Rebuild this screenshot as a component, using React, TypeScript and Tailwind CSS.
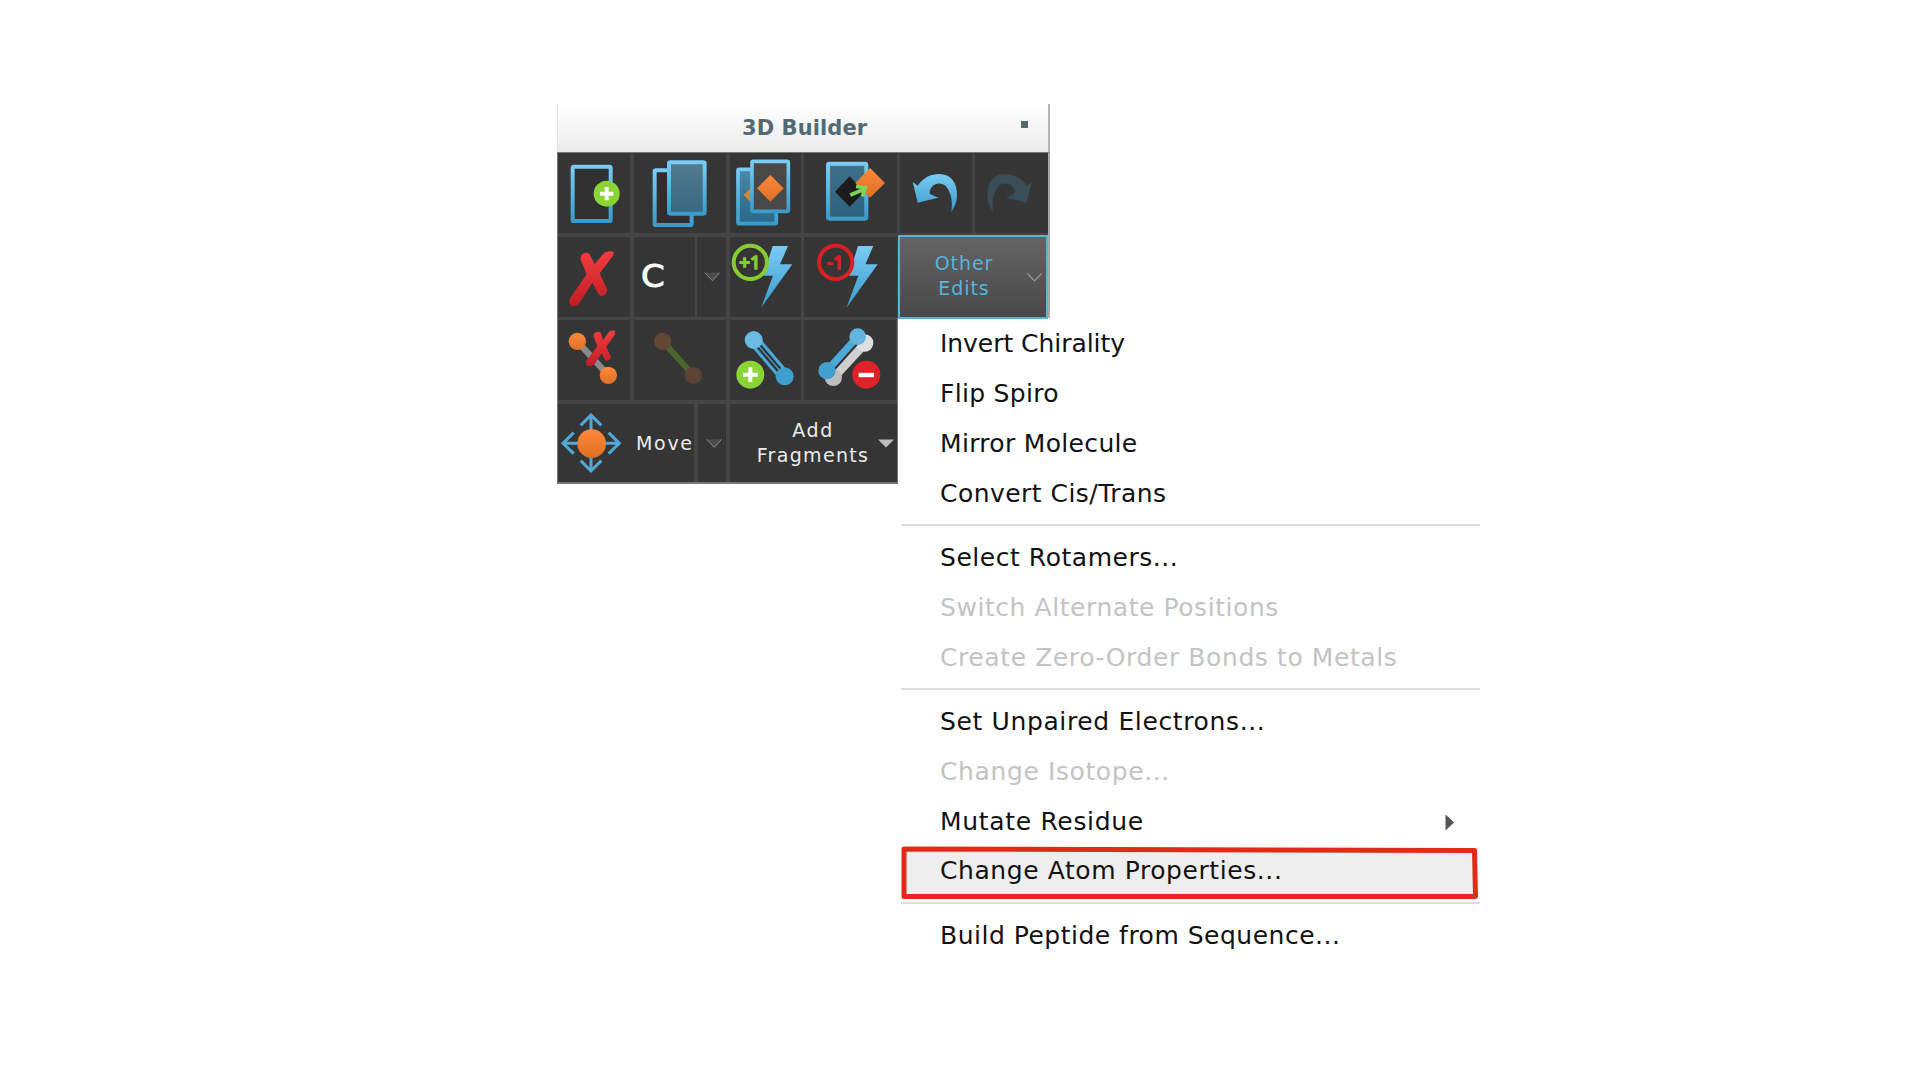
import type { ReactNode } from "react";

type MenuEntry =
  | { kind: "item"; label: string; tracking: string; disabled?: boolean; active?: boolean; submenu?: boolean }
  | { kind: "separator" };

const menu: MenuEntry[] = [
  { kind: "item", label: "Invert Chirality", tracking: "tracking-[-0.05px]" },
  { kind: "item", label: "Flip Spiro", tracking: "tracking-[0.3px]" },
  { kind: "item", label: "Mirror Molecule", tracking: "tracking-[0.32px]" },
  { kind: "item", label: "Convert Cis/Trans", tracking: "tracking-[0.46px]" },
  { kind: "separator" },
  { kind: "item", label: "Select Rotamers...", tracking: "tracking-[0.54px]" },
  { kind: "item", label: "Switch Alternate Positions", tracking: "tracking-[0.56px]", disabled: true },
  { kind: "item", label: "Create Zero-Order Bonds to Metals", tracking: "tracking-[0.59px]", disabled: true },
  { kind: "separator" },
  { kind: "item", label: "Set Unpaired Electrons...", tracking: "tracking-[0.63px]" },
  { kind: "item", label: "Change Isotope...", tracking: "tracking-[0.61px]", disabled: true },
  { kind: "item", label: "Mutate Residue", tracking: "tracking-[0.68px]", submenu: true },
  { kind: "item", label: "Change Atom Properties...", tracking: "tracking-[0.58px]", active: true },
  { kind: "separator" },
  { kind: "item", label: "Build Peptide from Sequence...", tracking: "tracking-[0.5px]" },
];

function Gradients() {
  const stops: [string, string, string][] = [
    ["blue", "#7acbf4", "#3b9bcb"],
    ["glass", "#527b90", "#37677f"],
    ["teal", "#4a89a8", "#286888"],
    ["orange", "#ff8a39", "#dd6f26"],
    ["red", "#f43c40", "#bf1e24"],
  ];
  return (
    <svg className="absolute h-0 w-0" aria-hidden="true">
      <defs>
        {stops.map(([id, from, to]) => (
          <linearGradient key={id} id={id} x1="0" y1="0" x2="0" y2="1">
            <stop offset="0" stopColor={from} />
            <stop offset="1" stopColor={to} />
          </linearGradient>
        ))}
      </defs>
    </svg>
  );
}

function Cell({ className, box, children }: { className: string; box: string; children: ReactNode }) {
  return (
    <button className={`block h-full shrink-0 bg-[#353535] ${className}`}>
      <svg viewBox={box} className="block h-full w-full" preserveAspectRatio="none">
        {children}
      </svg>
    </button>
  );
}

function Plus({ x, y, r, arm }: { x: number; y: number; r: number; arm: number }) {
  return (
    <>
      <circle cx={x} cy={y} r={r} fill="#8ad435" />
      <path d={`M${x - arm} ${y}h${arm * 2}M${x} ${y - arm}v${arm * 2}`} stroke="#fff" strokeWidth="12" />
    </>
  );
}

function Charge({ dx, color, label }: { dx: number; color: string; label: string }) {
  return (
    <g transform={`translate(${dx} 0)`}>
      <path d="M158 48L204 48L180 103L217 103L123 234L159 137L130 137Z" fill="url(#blue)" />
      <circle cx="91" cy="97" r="50" fill="#353535" stroke={color} strokeWidth="12" />
      <text x="90" y="116" fontSize="56" textAnchor="middle" fill={color} stroke={color} strokeWidth="5" fontFamily='"Noto Sans", sans-serif'>
        {label}
      </text>
    </g>
  );
}

function Toolbar12() {
  return (
    <>
      <div className="flex h-[80px]">
        <Cell className="mr-1 w-[72px]" box="24 159 216 240">
          <rect x="68" y="200" width="114" height="163" rx="4" fill="#303030" stroke="url(#blue)" strokeWidth="12" />
          <Plus x={170} y={281} r={39} arm={20} />
        </Cell>
        <Cell className="mr-1 w-[92px]" box="252 159 276 240">
          <rect x="314" y="211" width="111" height="164" rx="4" fill="#302d2c" stroke="url(#blue)" strokeWidth="12" />
          <rect x="357" y="187" width="107" height="154" rx="4" fill="url(#glass)" stroke="url(#blue)" strokeWidth="12" />
        </Cell>
        <Cell className="mr-[3px] w-[71px]" box="540 158 213 240">
          <rect x="564" y="207" width="115" height="163" rx="4" fill="url(#teal)" stroke="url(#blue)" strokeWidth="11" />
          <path d="M581 284L604 261V307Z" fill="#dc803f" />
          <rect x="606" y="183" width="109" height="150" rx="4" fill="#494949" stroke="url(#blue)" strokeWidth="11" />
          <path d="M661 224L701 264L661 304L621 264Z" fill="url(#orange)" />
        </Cell>
        <Cell className="mr-[3px] w-[93px]" box="12 159 279 240">
          <rect x="84" y="191" width="115" height="165" rx="4" fill="url(#glass)" stroke="url(#blue)" strokeWidth="12" />
          <rect x="92" y="199" width="99" height="149" fill="#1b5c80" opacity="0.35" />
          <path d="M149 229L193 275L149 320L105 275Z" fill="#1c1c1c" />
          <path d="M210 204L255 249L210 293L166 249Z" fill="url(#orange)" />
          <path d="M151 285L194 267M168 259L196 263L187 289" fill="none" stroke="#7ed557" strokeWidth="11" />
        </Cell>
        <Cell className="mr-[3px] w-[72px]" box="300 159 216 240">
          <path
            d="M338 245L353 257C370 233 392 222 418 222C452 222 471 248 471 282C471 304 464 322 454 335C459 304 453 280 440 262C430 248 408 247 396 260C389 268 388 275 390 282L415 293L353 308Z"
            fill="url(#blue)"
          />
        </Cell>
        <Cell className="w-[73px]" box="525 159 219 240">
          <path
            d="M695 245L680 257C663 233 641 222 615 222C581 222 562 248 562 282C562 304 569 322 579 335C574 304 580 280 593 262C603 248 625 247 637 260C644 268 645 275 643 282L618 293L680 308Z"
            fill="#3a4e59"
          />
        </Cell>
      </div>
      <div className="mt-1 flex h-[80px]">
        <Cell className="mr-1 w-[72px]" box="24 21 216 240">
          <path
            d="M94 75Q104 64 117 70L134 103L163 68Q178 60 191 66Q192 73 187 80L149 130L172 180Q169 198 151 198L144 190L127 158L88 219Q78 232 63 228Q56 220 59 206L110 133L91 86Z"
            fill="url(#red)"
          />
        </Cell>
        <button className="mr-[2px] flex h-full w-[61px] items-center bg-[#353535] pl-[7px] text-[32px] leading-[80px] text-white [-webkit-text-stroke:0.9px_white]">
          <span className="-mt-[2px] origin-left scale-x-[1.06]">C</span>
        </button>
        <Cell className="mr-1 w-[29px]" box="441 21 87 240">
          <path d="M464 128L487 153L509 128Z" fill="#4c4c4c" />
          <path d="M464 128L487 152L509 128" fill="none" stroke="#888" strokeWidth="3" />
        </Cell>
        <Cell className="mr-[3px] w-[71px]" box="30 21 213 240">
          <Charge dx={0} color="#88cc33" label="+1" />
        </Cell>
        <Cell className="mr-[1px] w-[93px]" box="252 21 279 240">
          <Charge dx={256} color="#da2025" label="-1" />
        </Cell>
        <button className="-mt-[2px] flex h-[84px] w-[150px] flex-col border-2 border-[#58b2da] bg-linear-to-b from-[#646464] to-[#484848] text-[19px] leading-[24.5px] text-[#58b4dd]">
          <span className="flex w-full items-center pt-[14px]">
            <span className="ml-[34px] w-[60px] text-center tracking-[0.95px]">
              Other Edits
            </span>
            <svg className="mt-[3px] ml-[32px] h-[11px] w-[17px]" viewBox="0 0 17 11">
              <path d="M1.5 1.5L8.5 9L15.5 1.5" fill="none" stroke="#999" strokeWidth="1.1" />
            </svg>
          </span>
        </button>
      </div>
    </>
  );
}

function Toolbar34() {
  return (
    <div className="h-[166px] w-[340px] shrink-0 border-r border-b-2 border-[#777] bg-[#454545]">
      <div className="h-[2px]" />
      <div className="flex h-[80px]">
        <Cell className="mr-1 w-[72px]" box="24 15 216 240">
          <path d="M82 79L175 181" stroke="#8a8a8a" strokeWidth="19" />
          <circle cx="82" cy="79" r="26" fill="url(#orange)" />
          <circle cx="175" cy="181" r="26" fill="url(#orange)" />
          <path
            d="M132 56Q142 46 152 53L159 75L177 50Q188 43 196 49L194 59L169 95L183 127Q178 139 166 137L155 115L132 149Q122 157 108 150Q107 141 111 134L142 94L130 62Z"
            fill="url(#red)"
          />
        </Cell>
        <Cell className="mr-1 w-[92px]" box="252 15 276 240">
          <path d="M338 79L430 181" stroke="#4d652f" strokeWidth="18" />
          <circle cx="338" cy="79" r="26" fill="#634734" />
          <circle cx="430" cy="181" r="26" fill="#5c4333" />
        </Cell>
        <Cell className="mr-[3px] w-[71px]" box="30 15 213 240">
          <path d="M101 75L194 184" stroke="#4ba8d8" strokeWidth="36" />
          <path d="M101 75L194 184" stroke="#303030" strokeWidth="17" />
          <path d="M101 75L194 184" stroke="#4592b9" strokeWidth="5" />
          <circle cx="101" cy="75" r="27" fill="#6bbbe3" />
          <circle cx="194" cy="184" r="27" fill="#409fcf" />
          <Plus x={91} y={179} r={42} arm={22} />
        </Cell>
        <Cell className="w-[92px]" box="252 15 276 240">
          <path d="M434 85L340 187" stroke="#cfcfcf" strokeWidth="28" />
          <circle cx="434" cy="84" r="26" fill="#dfdfdf" />
          <circle cx="340" cy="187" r="26" fill="#bebebe" />
          <path d="M413 68L321 170" stroke="#303030" strokeWidth="30" />
          <path d="M413 65L321 167" stroke="#4daada" strokeWidth="22" />
          <circle cx="413" cy="65" r="25" fill="#62b5df" />
          <circle cx="321" cy="167" r="26" fill="#439fcd" />
          <circle cx="439" cy="179" r="42" fill="#df2228" />
          <path d="M416 180H462" stroke="#fff" strokeWidth="13" />
        </Cell>
      </div>
      <div className="mt-1 flex h-[78px]">
        <div className="mr-1 flex h-full w-[136px] items-center bg-[#353535]">
          <svg viewBox="24 12 195 234" className="h-[78px] w-[65px] shrink-0">
            <path
              d="M123 44V214M92 76L123 45L154 76M92 182L123 213L154 182M40 130H207M71 98L39 130L71 161M176 98L208 130L176 161"
              fill="none"
              stroke="#51a9d6"
              strokeWidth="9"
            />
            <circle cx="125" cy="131" r="43" fill="url(#orange)" />
          </svg>
          <span className="ml-[13px] text-[19px] tracking-[1.7px] text-[#ececec]">Move</span>
        </div>
        <Cell className="mr-1 w-[28px]" box="444 12 84 234">
          <path d="M470 118L493 143L515 118Z" fill="#4c4c4c" />
          <path d="M470 118L493 142L515 118" fill="none" stroke="#888" strokeWidth="3" />
        </Cell>
        <button className="flex h-full w-[167px] items-start bg-[#353535] text-[19px] leading-[25px] text-[#ececec]">
          <span className="mt-[14px] ml-[22px] flex w-[122px] flex-col items-center">
            <span className="tracking-[1.6px]">Add</span>
            <span className="tracking-[1.34px]">Fragments</span>
          </span>
          <svg className="mt-[35px] ml-[4px] h-[9px] w-[16px]" viewBox="0 0 16 9">
            <path d="M0 0.5H16L8 8.5Z" fill="#bdbdbd" />
          </svg>
        </button>
      </div>
    </div>
  );
}

function MenuRow({ entry }: { entry: MenuEntry }) {
  if (entry.kind === "separator") {
    return (
      <li className="flex h-[14.6px] items-center pl-[3px]">
        <span className="h-[2px] w-[579px] bg-[#dcdcdc]" />
      </li>
    );
  }
  return (
    <li
      className={`relative flex h-[49.8px] items-center pl-[42px] text-[25px] whitespace-pre ${entry.tracking} ${
        entry.disabled ? "text-[#c3c3c3]" : "text-[#111]"
      }`}
    >
      {entry.active && (
        <svg className="absolute top-0 left-[3px] h-[54px] w-[578px]" viewBox="0 0 578 54">
          <path d="M3 3L573.5 4.4L574.5 50.5L3 50.5Z" fill="#eee" stroke="#e02b18" strokeWidth="5" strokeLinejoin="round" />
        </svg>
      )}
      <span className="relative">{entry.label}</span>
      {entry.submenu && (
        <svg className="absolute top-[18px] left-[547px] h-[17px] w-[9px]" viewBox="0 0 9 17">
          <path d="M0.5 0.5L9 8.5L0.5 16.5Z" fill="#555" />
        </svg>
      )}
    </li>
  );
}

export default function App() {
  return (
    <main className='relative h-[1080px] w-[1920px] overflow-hidden bg-white pt-[104px] pl-[557px] font-["DejaVu_Sans",sans-serif]'>
      <Gradients />
      <section className="w-[493px]">
        <header className="flex h-[48px] items-center border-r-2 border-l border-r-[#b4b4b4] border-l-[#e4e4e4] bg-linear-to-b from-white to-[#ebebeb]">
          <h1 className="mt-[1px] ml-[184px] w-[125px] text-[21px] font-bold tracking-[0.08px] whitespace-pre text-[#546971]">3D Builder</h1>
          <span className="mt-[-7px] ml-[154px] h-[7px] w-[7px] bg-[#546971]" />
        </header>
        <div className="h-[166px] border-t border-r-2 border-l border-t-[#777] border-r-[#a8a8a8] border-l-[#777] bg-[#454545]">
          <Toolbar12 />
        </div>
      </section>
      <div className="flex items-start">
        <div className="border-l border-[#777]">
          <Toolbar34 />
        </div>
        <ul className="w-[583px] pt-[1px]">
          {menu.map((entry, i) => (
            <MenuRow key={i} entry={entry} />
          ))}
        </ul>
      </div>
    </main>
  );
}
